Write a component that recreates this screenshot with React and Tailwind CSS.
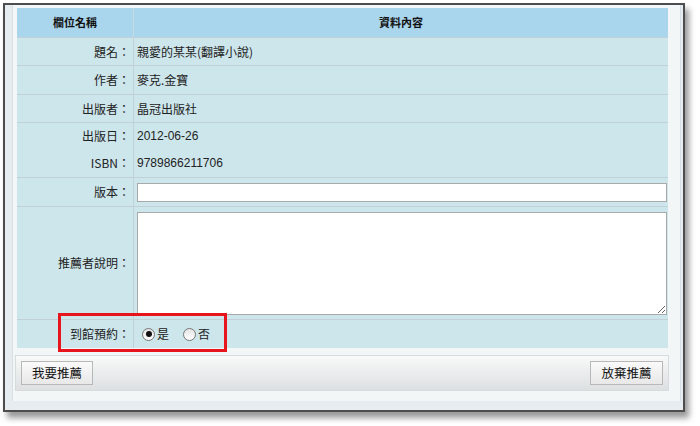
import { useState } from "react";

const cjk = { fontFamily: '"Noto Sans CJK TC", "Liberation Sans", sans-serif' };

function Row({ label, h, top = true, children }) {
  return (
    <div
      className={`grid grid-cols-[117px_1fr] ${top ? "border-t border-[#c0d2d7]" : ""}`}
      style={{ height: h }}
    >
      <div className="flex items-center justify-end border-r border-[#c0d2d7] pr-[3px] text-[12px] text-[#222]">
        {label}：
      </div>
      <div className="flex items-center px-[3px] text-[12px] text-[#222]">{children}</div>
    </div>
  );
}

function Radio({ checked, onClick, label }) {
  return (
    <label className="flex cursor-pointer items-center gap-[2px]" onClick={onClick}>
      <span className="flex h-[13px] w-[13px] items-center justify-center rounded-full border border-[#777] bg-gradient-to-b from-[#e4e4e4] to-white">
        {checked && <span className="h-[6px] w-[6px] rounded-full bg-[#111]" />}
      </span>
      <span className="text-[12px]">{label}</span>
    </label>
  );
}

export default function App() {
  const [visit, setVisit] = useState(true);

  return (
    <div className="relative h-[426px] w-[700px] bg-white pl-[3px] pt-[3px]" style={cjk}>
      {/* 外框 */}
      <div className="flex h-[409px] w-[682px] border-2 border-[#4d4d4d] bg-[#e6ecef] shadow-[4px_6px_6px_rgba(0,0,0,0.4)]">
        <div className="ml-[7px] mr-[2px] flex h-[396px] flex-1 flex-col border-l border-r border-[#d9e0e3] bg-[#f3f6f7] pl-[4px] pr-[3px] pt-[3px]">
          {/* 推薦表單 */}
          <div className="w-[651px] bg-[#cde6ec]">
            <div className="grid h-[29px] grid-cols-[117px_1fr] bg-[#a9d5ed] text-[11px] font-bold text-[#111]">
              <div className="flex items-center justify-center border-r border-[#c7dbe3]">欄位名稱</div>
              <div className="flex items-center justify-center">資料內容</div>
            </div>
            <Row label="題名" h={28}>親愛的某某(翻譯小說)</Row>
            <Row label="作者" h={29}>麥克.金寶</Row>
            <Row label="出版者" h={28}>晶冠出版社</Row>
            <Row label="出版日" h={27}>
              <span style={{ fontFamily: '"Liberation Sans", sans-serif' }}>2012-06-26</span>
            </Row>
            <Row label="ISBN" h={28} top={false}>
              <span style={{ fontFamily: '"Liberation Sans", sans-serif' }}>9789866211706</span>
            </Row>
            <Row label="版本" h={29}>
              <input className="h-[19px] w-[530px] border border-[#a9a9a9] bg-white outline-none" />
            </Row>
            <Row label="推薦者說明" h={113}>
              <textarea className="h-[103px] w-[530px] resize-y border border-[#a9a9a9] bg-white outline-none" />
            </Row>
            <Row label="到館預約" h={29}>
              <div className="ml-[5px] flex items-center gap-[14px]">
                <Radio checked={visit} onClick={() => setVisit(true)} label="是" />
                <Radio checked={!visit} onClick={() => setVisit(false)} label="否" />
              </div>
            </Row>
          </div>

          {/* 按鈕列 */}
          <div className="-ml-[2px] mt-[7px] flex h-[36px] w-[654px] items-center justify-between border border-[#d6dbde] bg-gradient-to-b from-[#f8f9f9] to-[#dde0e1] px-[5px]">
            <button className="h-[24px] w-[72px] border border-[#b8b8b8] bg-gradient-to-b from-[#fafafa] to-[#e8e8e8] text-[12.5px] text-[#111]">
              我要推薦
            </button>
            <button className="h-[24px] w-[73px] border border-[#b8b8b8] bg-gradient-to-b from-[#fafafa] to-[#e8e8e8] text-[12.5px] text-[#111]">
              放棄推薦
            </button>
          </div>
        </div>
      </div>

      {/* 標示框 */}
      <div className="pointer-events-none absolute left-[58px] top-[313px] h-[39px] w-[169px] border-[3px] border-[#e8141c]" />
    </div>
  );
}
